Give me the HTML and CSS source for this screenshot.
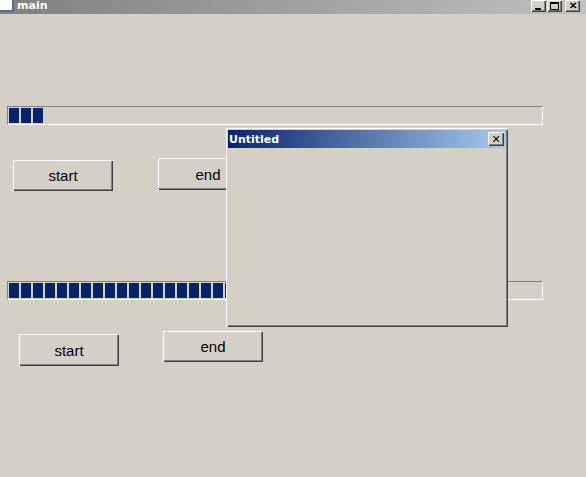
FILE: index.html
```html
<!DOCTYPE html>
<html lang="en">
<head>
  <meta charset="UTF-8"/>
  <title>main</title>
  <link rel="stylesheet" href="styles.css">
</head>
<body>
  <div class="window">
    <div class="titlebar">
      <span class="app-icon"></span>
      <span class="title">main</span>
      <div class="caption-btns">
        <span class="cap-btn"><span class="min-glyph"></span></span>
        <span class="cap-btn"><span class="max-glyph"></span></span>
        <span class="cap-btn close">&#x2715;</span>
      </div>
    </div>

    <div class="content">
      <div class="progress first">
        <span class="block"></span><span class="block"></span><span class="block"></span>
      </div>
      <div class="btn-row first-row">
        <button class="btn start-a">start</button>
        <button class="btn end-a">end</button>
      </div>

      <div class="progress second" id="bar2"></div>
      <div class="btn-row second-row">
        <button class="btn start-b">start</button>
        <button class="btn end-b">end</button>
      </div>
    </div>

    <div class="dialog">
      <div class="dlg-title">
        <span>Untitled</span>
        <span class="cap-btn dlg-close">&#x2715;</span>
      </div>
    </div>
  </div>

  <script>
    const bar2 = document.getElementById("bar2");
    for (let i = 0; i < 24; i++) {
      const b = document.createElement("span");
      b.className = "block";
      bar2.appendChild(b);
    }
  </script>
</body>
</html>
```

FILE: styles.css
```css
body { margin: 0; background: #d4d0c8; font-family: "Liberation Sans", Arial, sans-serif; }
.window { position: relative; width: 586px; height: 477px; background: #d4d0c8; overflow: hidden; }

.titlebar { height: 14px; display: flex; align-items: flex-start; background: linear-gradient(to right, #808080, #c0c0c0); }
.app-icon { width: 12px; height: 10px; background: #fff; border-right: 2px solid #5a6a90; border-bottom: 2px solid #5a6a90; }
.title { color: #fff; font-weight: bold; font-size: 11px; line-height: 12px; margin-left: 3px; font-family: "DejaVu Sans", sans-serif; }
.caption-btns { margin-left: auto; margin-right: 6px; display: flex; gap: 1px; }
.cap-btn { width: 15px; height: 12px; background: #d4d0c8; box-shadow: inset 1px 1px #fff, inset -1px -1px #404040, inset -2px -2px #808080; display: flex; align-items: center; justify-content: center; font-size: 10px; font-weight: bold; color: #000; line-height: 1; }
.caption-btns .close { margin-left: 2px; }
.min-glyph { width: 6px; height: 2px; background: #000; margin-top: 6px; margin-right: 2px; }
.max-glyph { width: 7px; height: 5px; border: 1px solid #000; border-top-width: 2px; }

.content { padding: 92px 0 0 7px; }
.progress { width: 532px; height: 15px; padding: 1px; border: 1px solid; border-color: #808080 #fff #fff #808080; display: flex; gap: 2px; overflow: hidden; }
.progress .block { flex: none; width: 10px; height: 15px; background: #0a246a; }

.btn-row { display: flex; align-items: flex-start; }
.btn { width: 100px; height: 31px; background: #d4d0c8; border: none; padding: 0; font-family: "Liberation Sans", Arial, sans-serif; font-size: 15px; color: #000; box-shadow: inset 1px 1px #fff, inset -1px -1px #404040, inset -2px -2px #808080; }
.first-row { margin-top: 33px; }
.start-a { margin-left: 6px; margin-top: 2px; }
.end-a { margin-left: 45px; height: 32px; }
.second { margin-top: 90px; }
.second-row { margin-top: 31px; }
.start-b { margin-left: 12px; margin-top: 3px; height: 32px; }
.end-b { margin-left: 44px; height: 31px; line-height: 1; padding-bottom: 1px; }

.dialog { position: absolute; left: 226px; top: 128px; width: 278px; height: 195px; padding: 2px; background: #d4d0c8; box-shadow: inset 1px 1px #fff, inset 2px 2px #d4d0c8, inset -1px -1px #404040, inset -2px -2px #808080; }
.dlg-title { height: 18px; display: flex; align-items: center; padding: 0 2px 0 1px; background: linear-gradient(to right, #0a246a, #a6caf0); color: #fff; font-family: "DejaVu Sans", sans-serif; font-weight: bold; font-size: 11px; }
.dlg-close { margin-left: auto; width: 16px; height: 14px; font-size: 11px; }
```
